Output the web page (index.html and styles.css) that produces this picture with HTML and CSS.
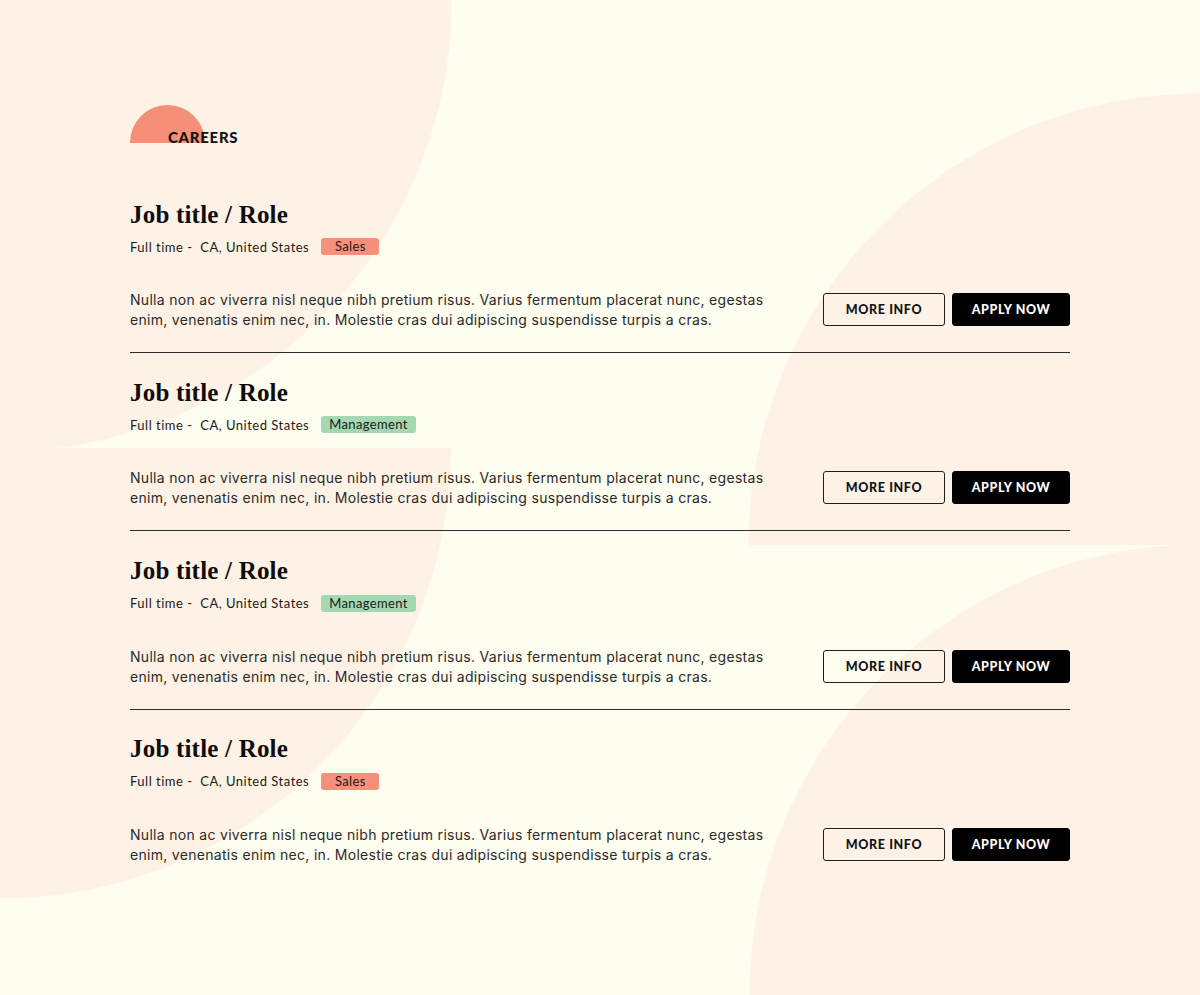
FILE: index.html
```html
<!DOCTYPE html>
<html lang="en">
<head>
<meta charset="utf-8">
<title>Careers</title>
<link rel="stylesheet" href="styles.css">
</head>
<body>
<main class="page">
  <div class="wrap">
    <h2 class="eyebrow"><span class="sun"></span><span class="eyebrow-text">CAREERS</span></h2>

    <section class="jobs">
      <article class="job">
        <h3 class="job-title">Job title / Role</h3>
        <div class="meta">
          <span class="meta-text">Full time -&nbsp; CA, United States</span>
          <span class="tag tag-sales">Sales</span>
        </div>
        <div class="job-row">
          <p class="desc">Nulla non ac viverra nisl neque nibh pretium risus. Varius fermentum placerat nunc, egestas enim, venenatis enim nec, in. Molestie cras dui adipiscing suspendisse turpis a cras.</p>
          <div class="actions">
            <a class="btn btn-outline" href="#">MORE INFO</a>
            <a class="btn btn-solid" href="#">APPLY NOW</a>
          </div>
        </div>
      </article>

      <article class="job">
        <h3 class="job-title">Job title / Role</h3>
        <div class="meta">
          <span class="meta-text">Full time -&nbsp; CA, United States</span>
          <span class="tag tag-mgmt">Management</span>
        </div>
        <div class="job-row">
          <p class="desc">Nulla non ac viverra nisl neque nibh pretium risus. Varius fermentum placerat nunc, egestas enim, venenatis enim nec, in. Molestie cras dui adipiscing suspendisse turpis a cras.</p>
          <div class="actions">
            <a class="btn btn-outline" href="#">MORE INFO</a>
            <a class="btn btn-solid" href="#">APPLY NOW</a>
          </div>
        </div>
      </article>

      <article class="job">
        <h3 class="job-title">Job title / Role</h3>
        <div class="meta">
          <span class="meta-text">Full time -&nbsp; CA, United States</span>
          <span class="tag tag-mgmt">Management</span>
        </div>
        <div class="job-row">
          <p class="desc">Nulla non ac viverra nisl neque nibh pretium risus. Varius fermentum placerat nunc, egestas enim, venenatis enim nec, in. Molestie cras dui adipiscing suspendisse turpis a cras.</p>
          <div class="actions">
            <a class="btn btn-outline" href="#">MORE INFO</a>
            <a class="btn btn-solid" href="#">APPLY NOW</a>
          </div>
        </div>
      </article>

      <article class="job">
        <h3 class="job-title">Job title / Role</h3>
        <div class="meta">
          <span class="meta-text">Full time -&nbsp; CA, United States</span>
          <span class="tag tag-sales">Sales</span>
        </div>
        <div class="job-row">
          <p class="desc">Nulla non ac viverra nisl neque nibh pretium risus. Varius fermentum placerat nunc, egestas enim, venenatis enim nec, in. Molestie cras dui adipiscing suspendisse turpis a cras.</p>
          <div class="actions">
            <a class="btn btn-outline" href="#">MORE INFO</a>
            <a class="btn btn-solid" href="#">APPLY NOW</a>
          </div>
        </div>
      </article>
    </section>
  </div>
</main>
</body>
</html>
```

FILE: styles.css
```css
* { box-sizing: border-box; }

html, body {
  margin: 0;
  padding: 0;
}

body {
  background: #fffcf0;
  color: #111;
  font-family: "Inter", "Liberation Sans", sans-serif;
}

.page {
  min-height: 995px;
  background-color: #fffcf0;
  background-image:
    radial-gradient(circle at 0 0, #fef2e7 451px, rgba(254, 242, 231, 0) 452px),
    radial-gradient(circle at 0 0, #fef2e7 450px, rgba(254, 242, 231, 0) 451px),
    radial-gradient(circle at 100% 100%, #fef2e7 451px, rgba(254, 242, 231, 0) 452px),
    radial-gradient(circle at 100% 100%, #fef2e7 450px, rgba(254, 242, 231, 0) 451px);
  background-repeat: no-repeat;
  background-size: 452px 448px, 452px 450px, 452px 452px, 451px 450px;
  background-position: 0 0, 0 448px, 100% 93px, 100% 545px;
  padding: 105px 130px 0 130px;
}

.wrap {
  width: 940px;
}

/* heading */
.eyebrow {
  display: flex;
  align-items: flex-end;
  margin: 0;
  height: 37.5px;
}

.sun {
  width: 75px;
  height: 37.5px;
  border-radius: 37.5px 37.5px 0 0;
  background: #f68f78;
  flex: none;
}

.eyebrow-text {
  margin-left: -37px;
  position: relative;
  font-family: "Lato", "Liberation Sans", sans-serif;
  font-weight: 900;
  font-size: 15px;
  letter-spacing: 0.7px;
  line-height: 15px;
  margin-bottom: -2px;
  color: #111;
}

/* jobs */
.jobs {
  margin-top: 57px;
}

.job {
  padding: 24.8px 0 22px;
  border-bottom: 1px solid #2d2d2d;
}

.job:first-child {
  padding-top: 0;
}

.job:last-child {
  border-bottom: none;
}

.job-title {
  margin: 0;
  font-family: "Liberation Serif", "DejaVu Serif", serif;
  font-weight: 700;
  font-size: 25px;
  line-height: 30px;
  letter-spacing: 0.2px;
  color: #0d0d0d;
}

.meta {
  display: flex;
  align-items: center;
  gap: 12px;
  margin-top: 8.5px;
  height: 17px;
}

.meta-text {
  font-family: "Lato", "Liberation Sans", sans-serif;
  font-size: 13px;
  letter-spacing: 0.5px;
  color: #1a1a1a;
}

.tag {
  display: inline-block;
  min-width: 58px;
  height: 17px;
  padding: 0 8px;
  border-radius: 3px;
  font-family: "Lato", "Liberation Sans", sans-serif;
  font-size: 13px;
  line-height: 17px;
  letter-spacing: 0.35px;
  text-align: center;
  color: #1a1a1a;
}

.tag-sales { background: #f6907a; }
.tag-mgmt { background: #a4d8b1; }

.job-row {
  display: flex;
  align-items: center;
  justify-content: space-between;
  margin-top: 35px;
}

.desc {
  margin: 0;
  width: 660px;
  font-family: "Inter", "Liberation Sans", sans-serif;
  font-size: 14px;
  line-height: 20px;
  letter-spacing: 0.3px;
  color: #2a2a2a;
}

.actions {
  display: flex;
  gap: 7px;
  margin-top: -1px;
}

.btn {
  display: flex;
  align-items: center;
  justify-content: center;
  height: 33px;
  border-radius: 3px;
  font-family: "Lato", "Liberation Sans", sans-serif;
  font-weight: 900;
  font-size: 12.5px;
  letter-spacing: 0.6px;
  text-decoration: none;
}

.btn-outline {
  width: 122px;
  border: 1.5px solid #1f1f1f;
  color: #111;
  background: transparent;
}

.btn-solid {
  width: 118px;
  background: #000;
  color: #fff;
  border: 1.5px solid #000;
}
```
